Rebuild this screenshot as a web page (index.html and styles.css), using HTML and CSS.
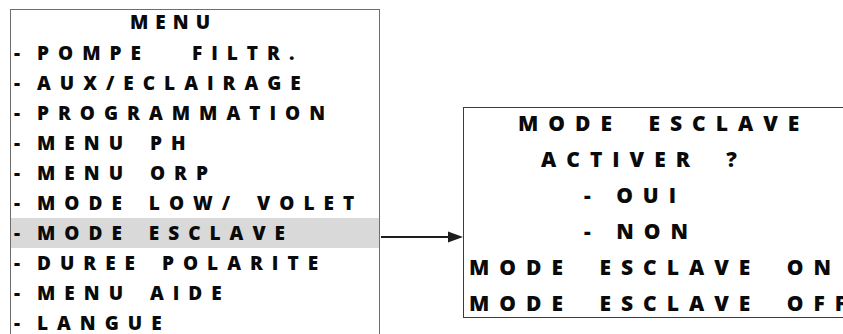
FILE: index.html
```html
<!DOCTYPE html>
<html lang="fr">
<head>
    <meta charset="UTF-8">
    <meta name="viewport" content="width=device-width, initial-scale=1.0">
    <title>Menu - mode esclave</title>
    <link rel="stylesheet" href="styles.css">
</head>
<body>
    <div class="scene">
        <div class="panel menu">
            <div class="menu-title">MENU</div>
            <ul class="menu-list">
                <li><span class="wide">POMPE</span>FILTR.</li>
                <li>AUX/ECLAIRAGE</li>
                <li>PROGRAMMATION</li>
                <li>MENU PH</li>
                <li>MENU ORP</li>
                <li>MODE LOW/ VOLET</li>
                <li class="selected">MODE ESCLAVE</li>
                <li>DUREE POLARITE</li>
                <li>MENU AIDE</li>
                <li>LANGUE</li>
            </ul>
        </div>

        <div class="arrow">
            <svg width="82" height="12" viewBox="0 0 82 12">
                <line x1="0" y1="6" x2="70" y2="6" stroke="#1e1e1e" stroke-width="2"/>
                <polygon points="67,0.5 82,6 67,11.5" fill="#1e1e1e"/>
            </svg>
        </div>

        <div class="panel screen">
            <div class="line title">MODE ESCLAVE</div>
            <div class="line ask">ACTIVER ?</div>
            <div class="line choice">- OUI</div>
            <div class="line choice">- NON</div>
            <div class="line">MODE ESCLAVE ON</div>
            <div class="line">MODE ESCLAVE OFF</div>
        </div>
    </div>
</body>
</html>
```

FILE: styles.css
```css
body {
    margin: 0;
    overflow: hidden;
    background: #ffffff;
    color: #0a0a0a;
    font-family: "Open Sans", "DejaVu Sans", sans-serif;
    font-weight: 800;
}

.scene {
    display: flex;
    align-items: flex-start;
    padding-left: 10px;
}

.panel {
    background: #ffffff;
    flex-shrink: 0;
}

/* menu list on the left */
.menu {
    margin-top: 9px;
    width: 368px;
    height: 340px;
    border: 1px solid #6e6e6e;
    font-size: 19px;
    letter-spacing: 9px;
    word-spacing: 4px;
}

.menu-title {
    padding-left: 119px;
    line-height: 25px;
    padding-bottom: 3px;
    letter-spacing: 7px;
}

.menu-list {
    list-style: none;
    margin: 0;
    padding: 0;
}

.menu-list li {
    display: flex;
    line-height: 30px;
    padding-left: 3px;
    white-space: pre;
}

.menu-list li::before {
    content: "-";
    width: 23px;
    flex-shrink: 0;
    letter-spacing: 0;
}

.menu-list .wide {
    margin-right: 42px;
}

.menu-list .selected {
    background: #d9d9d9;
}

/* connector */
.arrow {
    margin-top: 231px;
    margin-left: 1px;
    width: 82px;
    height: 12px;
    display: flex;
    flex-shrink: 0;
}

/* detail screen on the right */
.screen {
    margin-top: 107px;
    width: 420px;
    height: 209px;
    border: 1px solid #3c3c3c;
    border-right: none;
    font-size: 21px;
    letter-spacing: 10px;
    word-spacing: 11px;
}

.line {
    line-height: 36px;
    padding-left: 5px;
    white-space: pre;
}

.line.title {
    margin-top: -3px;
    padding-left: 54px;
}

.line.ask {
    padding-left: 77px;
}

.line.choice {
    padding-left: 120px;
    word-spacing: 0;
}
```
